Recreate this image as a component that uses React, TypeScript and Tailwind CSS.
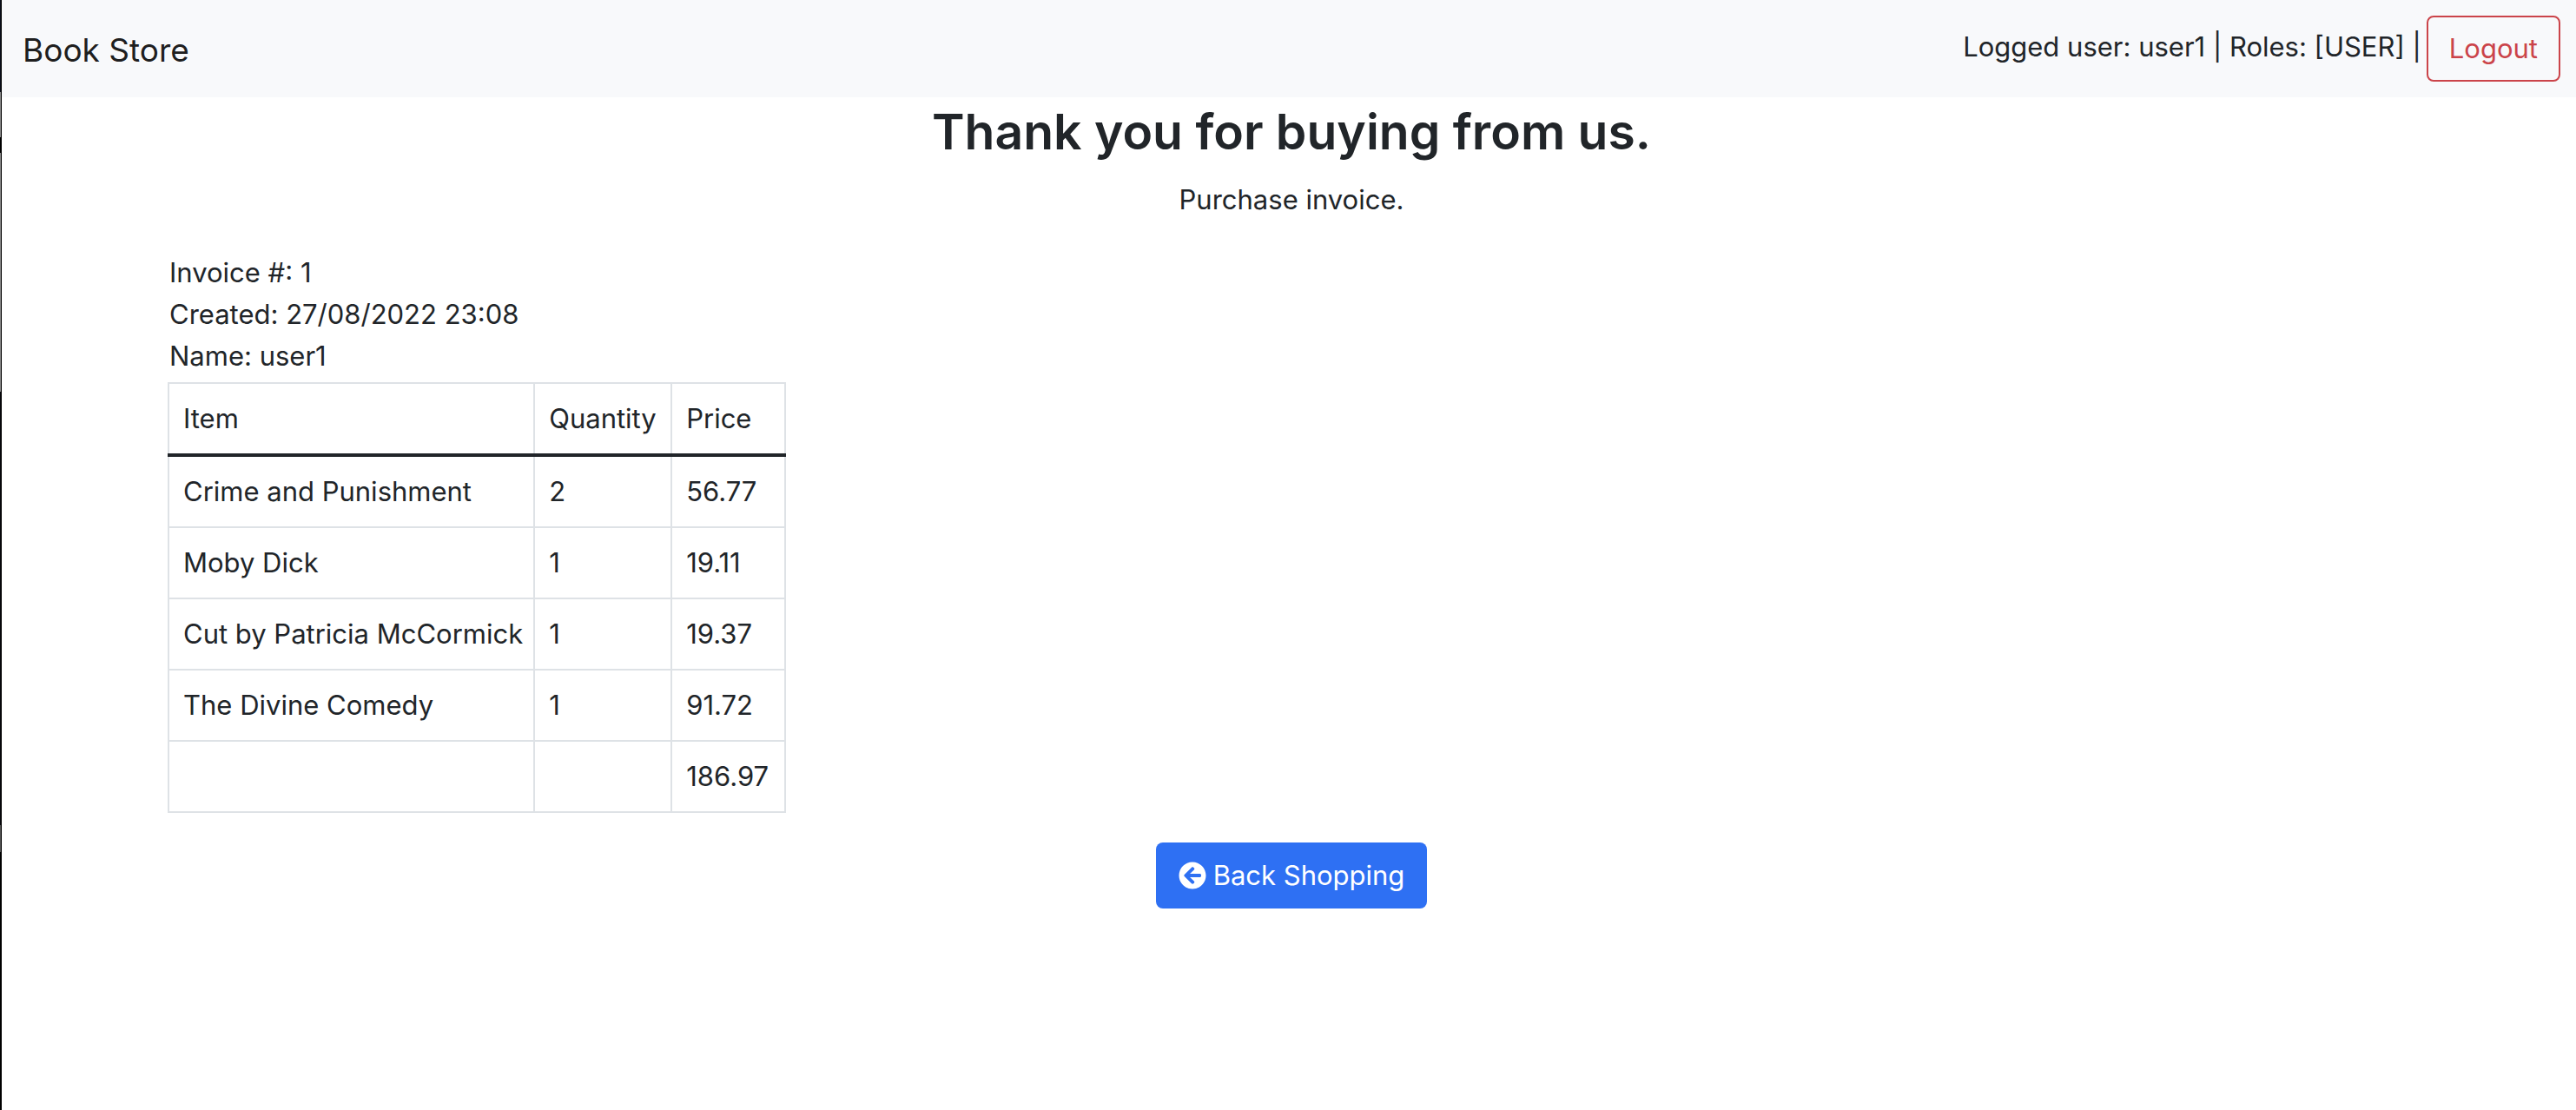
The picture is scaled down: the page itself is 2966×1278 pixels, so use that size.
import React from "react";
import { FaArrowCircleLeft } from "react-icons/fa";

const items = [
  { name: "Crime and Punishment", quantity: "2", price: "56.77" },
  { name: "Moby Dick", quantity: "1", price: "19.11" },
  { name: "Cut by Patricia McCormick", quantity: "1", price: "19.37" },
  { name: "The Divine Comedy", quantity: "1", price: "91.72" },
  { name: "", quantity: "", price: "186.97" },
];

const cell = "border-2 border-[#dee2e6] py-4 pl-4 pr-3 text-left font-normal";

export default function App() {
  return (
    <div className="flex min-h-screen bg-white font-['Inter',sans-serif] text-[31px] leading-[48px] text-[#212529]">
      <div aria-hidden="true" className="flex w-[2px] shrink-0 bg-black">
        <div className="flex w-px flex-col">
          <div className="h-[106px] bg-[#0b0e1a]" />
          <div className="h-[52px] bg-[#8a8a8a]" />
          <div className="h-[18px] bg-black" />
          <div className="h-[275px] bg-[#8a8a8a]" />
          <div className="h-[499px] bg-[#08080c]" />
          <div className="h-[31px] bg-[#555555]" />
        </div>
      </div>
      <div className="min-w-0 flex-1">
        <nav className="flex h-28 items-center justify-between bg-[#f8f9fb] pr-[18px] pl-6">
          <a href="#" className="pt-1 text-[37px] leading-[60px] text-black/90">Book Store</a>
          <div className="flex items-center gap-[6px]">
            <span className="pb-1">Logged user: user1 | Roles: [USER] |</span>
            <button className="rounded-lg border-2 border-[#cb444a] px-6 py-3 text-[#cb444a]">Logout</button>
          </div>
        </nav>
        <main className="pl-[6px]">
          <header className="text-center">
            <h1 className="text-[57px] leading-[80px] font-semibold">Thank you for buying from us.</h1>
            <p className="mt-[14px]">Purchase invoice.</p>
          </header>
          <section className="mt-9 px-[185px]">
            <div className="px-[2px]">
              <p>Invoice #: 1</p>
              <p>Created: 27/08/2022 23:08</p>
              <p>Name: user1</p>
            </div>
            <table className="mt-[6px] border-collapse">
              <thead>
                <tr>
                  <th scope="col" className={cell}>Item</th>
                  <th scope="col" className={`${cell} min-w-[158px]`}>Quantity</th>
                  <th scope="col" className={`${cell} min-w-[131px]`}>Price</th>
                </tr>
              </thead>
              <tbody className="border-t-4 border-[#212529]">
                {items.map((item) => (
                  <tr key={item.price}>
                    <td className={cell}>{item.name}</td>
                    <td className={cell}>{item.quantity}</td>
                    <td className={cell}>{item.price}</td>
                  </tr>
                ))}
              </tbody>
            </table>
          </section>
          <div className="mt-[34px] flex justify-center">
            <a href="#" className="flex items-center gap-2 rounded-lg bg-[#2e70f3] px-[26px] py-[14px] text-white">
              <FaArrowCircleLeft className="size-8" />
              Back Shopping
            </a>
          </div>
        </main>
      </div>
    </div>
  );
}
